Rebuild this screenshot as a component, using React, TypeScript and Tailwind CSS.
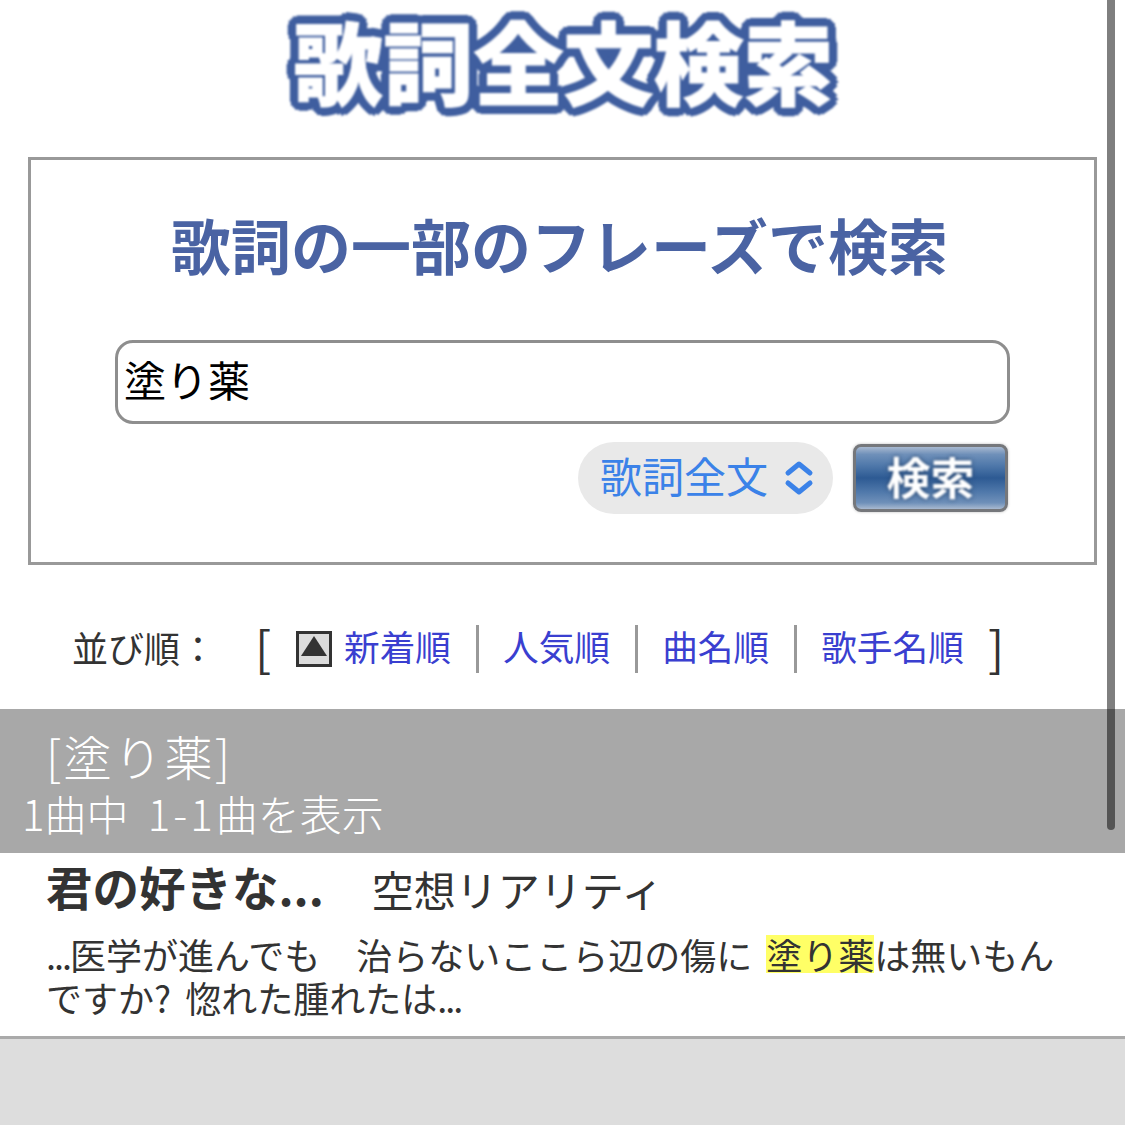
const jp = "font-['Noto_Sans_CJK_JP','Noto_Sans',sans-serif]";

function SortLink({ label, divider = true }: { label: string; divider?: boolean }) {
  return (
    <span
      className={
        "flex h-[48px] items-center pb-[6px] text-[35.7px] leading-none text-[#3a3fd0] " +
        (divider ? "border-r-[3px] border-[#999999] pr-[25px] mr-[24px]" : "")
      }
    >
      {label}
    </span>
  );
}

export default function App() {
  return (
    <div className={jp + " relative h-[1125px] w-[1125px] overflow-hidden bg-white text-[#333333]"}>
      {/* Logo */}
      <div className="flex h-[157px] justify-center pl-[2px] pt-[3px]">
        <span className="h-[112px] text-[90px] font-black leading-[112px] whitespace-nowrap text-white blur-[1px] [-webkit-text-stroke:1px_white] [text-shadow:9px_0_0_#3f5e9f,-9px_0_0_#3f5e9f,0_9px_0_#3f5e9f,0_-9px_0_#3f5e9f,6px_6px_0_#3f5e9f,-6px_6px_0_#3f5e9f,6px_-6px_0_#3f5e9f,-6px_-6px_0_#3f5e9f,8px_4px_0_#3f5e9f,-8px_4px_0_#3f5e9f,8px_-4px_0_#3f5e9f,-8px_-4px_0_#3f5e9f,4px_8px_0_#3f5e9f,-4px_8px_0_#3f5e9f,4px_-8px_0_#3f5e9f,-4px_-8px_0_#3f5e9f,4px_0_0_#3f5e9f,-4px_0_0_#3f5e9f,0_4px_0_#3f5e9f,0_-4px_0_#3f5e9f]">
          歌詞全文検索
        </span>
      </div>

      {/* Search box */}
      <div className="mx-[28px] flex h-[408px] w-[1069px] flex-col border-[3px] border-[#999999] px-[84px]">
        <h1 className="mt-[49px] pr-[6px] text-center text-[60px] font-bold leading-[70px] whitespace-nowrap text-[#4a63a3]">
          歌詞の一部のフレーズで検索
        </h1>
        <div className="mt-[61px] flex h-[84px] w-[895px] items-center rounded-[18px] border-[3px] border-[#8e8e8e] pb-[7px] pl-[6px] text-[42px] text-black">
          塗り薬
        </div>
        <div className="mt-[18px] flex w-[895px] items-center justify-end">
          <div className="flex h-[72px] w-[255px] items-center rounded-full bg-[#e9e9e9] pl-[22px] text-[42px] text-[#3b82e8]">
            <span className="-translate-y-[4px]">歌詞全文</span>
            <svg className="ml-[16px]" width="30" height="38" viewBox="0 0 30 38" fill="none" stroke="#3b82e8" strokeWidth="5" strokeLinecap="round" strokeLinejoin="round">
              <path d="M4 14 L15 5 L26 14" />
              <path d="M4 24 L15 33 L26 24" />
            </svg>
          </div>
          <button className="ml-[20px] mr-[2px] flex h-[68px] w-[155px] items-center justify-center rounded-[8px] border-[3px] border-[#75777b] bg-[linear-gradient(to_bottom,#a8b9d0_0%,#6f90b9_12%,#4f78aa_30%,#2d5a93_50%,#4f78aa_72%,#6f90b9_90%,#a8b9d0_100%)] pb-[5px] text-[44px] font-bold text-white shadow-[0_0_3px_#bbbbbb]">
            <span className="blur-[1px] [text-shadow:0_0_4px_#1f3a60]">検索</span>
          </button>
        </div>
      </div>

      {/* Sort order */}
      <div className="mt-[60px] flex h-[48px] items-center pl-[72px]">
        <span className="w-[183px] pb-[4px] text-[36px] leading-none">並び順：</span>
        <span className="w-[41px] pb-[6px] text-[48px] leading-none">[</span>
        <svg className="mr-[12px]" width="36" height="36" viewBox="0 0 36 36">
          <rect x="1.5" y="1.5" width="33" height="33" fill="#dcdcdc" stroke="#333333" strokeWidth="3" />
          <path d="M18 5 L31 25 L5 25 Z" fill="#333333" />
        </svg>
        <SortLink label="新着順" />
        <SortLink label="人気順" />
        <SortLink label="曲名順" />
        <SortLink label="歌手名順" divider={false} />
        <span className="ml-[24px] pb-[6px] text-[48px] leading-none">]</span>
      </div>

      {/* Result header */}
      <div className="mt-[36px] h-[144px] bg-[#a8a8a8] pl-[22px] text-white">
        <div className="pl-[24px] pt-[17px] text-[48px] font-light leading-[59px] tracking-[2.5px]">[塗り薬]</div>
        <div className="text-[42px] font-light leading-[56px] whitespace-nowrap [word-spacing:10px]">
          1曲中 <span className="tracking-[3px]">1-1</span>曲を表示
        </div>
      </div>

      {/* Result row */}
      <div className="h-[186px] border-b-[3px] border-[#aaaaaa] px-[46px]">
        <div className="flex h-[66px] items-center">
          <span className="text-[46.5px] font-bold leading-none">君の好きな...</span>
          <span className="ml-[48px] translate-y-[3px] text-[42px] leading-none">空想リアリティ</span>
        </div>
        <p className="mt-[14px] w-[1030px] text-[36px] leading-[43px]">
          <span className="tracking-[-2px]">...</span>医学が進んでも　治らないここら辺の傷に<span className="ml-[14px] inline-block h-[38px] bg-[#ffff66] leading-[38px]">塗り薬</span>は無いもんですか?<span className="ml-[6px]"> </span>惚れた腫れたは<span className="tracking-[-2px]">...</span>
        </p>
      </div>

      {/* Footer */}
      <div className="h-[86px] bg-[#dddddd]" />

      {/* Scrollbar */}
      <div className="absolute right-[10px] top-0 h-[830px] w-[8px] rounded-b-full bg-black/50" />
    </div>
  );
}
